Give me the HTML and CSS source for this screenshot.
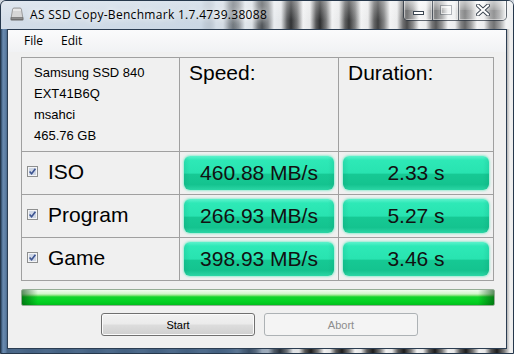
FILE: index.html
```html
<!DOCTYPE html>
<html lang="en">
<head>
  <meta charset="UTF-8" />
  <title>AS SSD Copy-Benchmark</title>
  <link rel="stylesheet" href="styles.css">
</head>
<body>

<div class="window">
  <div class="titlebar">
    <svg class="app-icon" width="16" height="16" viewBox="0 0 16 16">
      <path d="M2.2 11.5 L3.6 3.2 Q3.9 2 5.1 2 H10.9 Q12.1 2 12.4 3.2 L13.8 11.5 Z" fill="#d6d6d6" stroke="#8a8a8a" stroke-width="0.8"/>
      <path d="M4 4 H12" stroke="#fafafa" stroke-width="1.2"/>
      <rect x="1.5" y="11" width="13" height="3.6" rx="1" fill="#6f6f6f"/>
      <rect x="2.5" y="11.6" width="11" height="1" fill="#a5a5a5"/>
    </svg>
    <span class="title">AS SSD Copy-Benchmark 1.7.4739.38088</span>
    <div class="caption-buttons">
      <span class="cap cap-min"><i></i></span>
      <span class="cap cap-max"><i></i></span>
      <span class="cap cap-close">
        <svg width="14" height="12" viewBox="0 0 14 12">
          <path d="M2 1.5 L12 10.5 M12 1.5 L2 10.5" stroke="#3a4450" stroke-width="4" stroke-linecap="round"/>
          <path d="M2 1.5 L12 10.5 M12 1.5 L2 10.5" stroke="#ffffff" stroke-width="2.2" stroke-linecap="round"/>
        </svg>
      </span>
    </div>
  </div>

  <div class="client">
    <div class="menubar">
      <span>File</span>
      <span>Edit</span>
    </div>

    <div class="results">
      <div class="cell info">Samsung SSD 840<br>EXT41B6Q<br>msahci<br>465.76 GB</div>
      <div class="cell head">Speed:</div>
      <div class="cell head">Duration:</div>

      <div class="cell label">
        <svg class="check" width="11" height="11" viewBox="0 0 11 11"><rect x="0.5" y="0.5" width="10" height="10" fill="#f4f5f7" stroke="#8e8f8f"/><rect x="2" y="2" width="7" height="7" fill="#cfd7e6"/><path d="M2.6 5.4 L4.6 7.8 L8.4 2.8" fill="none" stroke="#3d5491" stroke-width="1.6"/></svg>
        ISO
      </div>
      <div class="cell"><div class="value">460.88 MB/s</div></div>
      <div class="cell"><div class="value">2.33 s</div></div>

      <div class="cell label">
        <svg class="check" width="11" height="11" viewBox="0 0 11 11"><rect x="0.5" y="0.5" width="10" height="10" fill="#f4f5f7" stroke="#8e8f8f"/><rect x="2" y="2" width="7" height="7" fill="#cfd7e6"/><path d="M2.6 5.4 L4.6 7.8 L8.4 2.8" fill="none" stroke="#3d5491" stroke-width="1.6"/></svg>
        Program
      </div>
      <div class="cell"><div class="value">266.93 MB/s</div></div>
      <div class="cell"><div class="value">5.27 s</div></div>

      <div class="cell label">
        <svg class="check" width="11" height="11" viewBox="0 0 11 11"><rect x="0.5" y="0.5" width="10" height="10" fill="#f4f5f7" stroke="#8e8f8f"/><rect x="2" y="2" width="7" height="7" fill="#cfd7e6"/><path d="M2.6 5.4 L4.6 7.8 L8.4 2.8" fill="none" stroke="#3d5491" stroke-width="1.6"/></svg>
        Game
      </div>
      <div class="cell"><div class="value">398.93 MB/s</div></div>
      <div class="cell"><div class="value">3.46 s</div></div>
    </div>

    <div class="progress"></div>

    <div class="buttons">
      <button class="btn">Start</button>
      <button class="btn" disabled>Abort</button>
    </div>
  </div>
</div>

</body>
</html>
```

FILE: styles.css
```css
body {
  margin: 0;
  padding: 0;
  background: #cfd6de;
}

/* Ventana con marco estilo Aero */
.window {
  width: 514px;
  height: 354px;
  box-sizing: border-box;
  border: 1px solid #26384c;
  border-radius: 6px 6px 0 0;
  display: flex;
  flex-direction: column;
  overflow: hidden;
  background:
    linear-gradient(90deg, #2f4a68 0, #6a8bb0 2px, #5a7ba0 5px, rgba(70,100,134,0.97) 6px, rgba(70,100,134,0.95) 230px, rgba(76,106,140,0) 300px),
    repeating-linear-gradient(90deg, #1c1c1c 0, #777 7px, #f1f1f1 13px, #e6e6e6 19px, #555 25px, #1c1c1c 31px),
    #cccccc;
}

.titlebar {
  height: 28px;
  display: flex;
  align-items: flex-start;
  background:
    linear-gradient(180deg, rgba(255,255,255,0.3), rgba(255,255,255,0) 70%),
    linear-gradient(90deg, #d4dee9 0, #cad7e4 200px, rgba(196,210,224,0.45) 235px, rgba(196,210,224,0.08) 300px, rgba(235,238,242,0.2) 390px, rgba(240,242,245,0.45) 100%),
    repeating-linear-gradient(90deg, #1a1a1a 0, #6d6d6d 6px, #f4f4f4 12px, #eaeaea 19px, #4a4a4a 25px, #1a1a1a 29px),
    #cfd6de;
}

.app-icon {
  margin: 5px 0 0 8px;
  flex: none;
}

.title {
  margin-left: 5px;
  font-family: "Open Sans", "Noto Sans", sans-serif;
  font-size: 12px;
  letter-spacing: 0.3px;
  line-height: 28px;
  color: #000;
  text-shadow: 0 0 6px #fff, 0 0 10px rgba(255,255,255,0.9);
}

.caption-buttons {
  margin: -1px 6px 0 auto;
  height: 20px;
  display: flex;
  border: 1px solid rgba(35,45,58,0.7);
  border-top: none;
  border-radius: 0 0 5px 5px;
  overflow: hidden;
}

.cap {
  display: flex;
  align-items: center;
  justify-content: center;
  height: 100%;
  background: linear-gradient(180deg, rgba(255,255,255,0.5), rgba(255,255,255,0.2) 50%, rgba(255,255,255,0.08) 51%, rgba(255,255,255,0.25));
  box-shadow: inset 0 0 0 1px rgba(255,255,255,0.45);
}

.cap + .cap {
  border-left: 1px solid rgba(35,45,58,0.6);
}

.cap-min { width: 28px; }
.cap-max { width: 25px; }
.cap-close { width: 47px; }

.cap-min i {
  width: 9px;
  height: 2px;
  margin-top: 5px;
  background: #fff;
  border: 1px solid #3a4450;
}

.cap-max i {
  width: 8px;
  height: 5px;
  border: 1px solid #fff;
  border-top-width: 2px;
  outline: 1px solid rgba(58,68,80,0.6);
  opacity: 0.6;
}

.client {
  flex: 1;
  margin: 0 6px 4px 6px;
  border: 1px solid #2b3d52;
  background: #f0f0f0;
  display: flex;
  flex-direction: column;
}

.menubar {
  height: 22px;
  padding-left: 7px;
  display: flex;
  background: linear-gradient(180deg, #fbfbfc, #f1f2f4);
  font-family: "Open Sans", "Noto Sans", sans-serif;
  font-size: 12px;
  line-height: 22px;
}

.menubar span {
  padding: 0 9px;
}

/* Tabla de resultados */
.results {
  margin: 5px 0 0 13px;
  width: max-content;
  display: grid;
  grid-template-columns: 157px 158px 154px;
  grid-template-rows: 93px 42px 42px 42px;
  gap: 1px;
  background: #a0a0a0;
  border: 1px solid #a0a0a0;
  font-family: "Liberation Sans", Arial, sans-serif;
  color: #000;
}

.cell {
  background: #f0f0f0;
}

.info {
  padding: 4px 0 0 12px;
  font-size: 13px;
  line-height: 21px;
}

.head {
  padding: 3px 0 0 9px;
  font-size: 21px;
  line-height: 24px;
}

.label {
  display: flex;
  align-items: center;
  gap: 10px;
  padding: 0 0 3px 5px;
  font-size: 21px;
}

.check {
  flex: none;
  margin-top: -1px;
}

.value {
  margin: 4px;
  height: 34px;
  border-radius: 6px;
  display: flex;
  align-items: center;
  justify-content: center;
  font-size: 21px;
  color: #111;
  background:
    linear-gradient(90deg, rgba(0,120,90,0.12) 0, rgba(0,120,90,0) 6px, rgba(0,120,90,0) calc(100% - 6px), rgba(0,120,90,0.12) 100%),
    linear-gradient(180deg, #5cf2cc 0, #2ee9b7 12%, #28e3b0 50%, #16c994 54%, #14c38f 84%, #2bd6a5 100%);
  box-shadow: 0 0 2px 1px rgba(120,235,200,0.7);
}

.progress {
  margin: 8px 0 0 13px;
  width: 474px;
  height: 17px;
  box-sizing: border-box;
  border: 1px solid #95ad95;
  border-radius: 2px;
  background:
    linear-gradient(90deg, rgba(0,70,10,0.6) 0, rgba(0,80,10,0) 16px, rgba(0,80,10,0) calc(100% - 16px), rgba(0,70,10,0.6) 100%),
    linear-gradient(180deg, #f2fcf0 0, #d2f5cb 26%, #74e06c 38%, #12d52c 46%, #02d221 80%, #02bd1d 100%);
}

.buttons {
  margin: 7px 0 0 93px;
  display: flex;
  gap: 9px;
}

.btn {
  width: 154px;
  height: 23px;
  box-sizing: border-box;
  padding: 0;
  border: 1px solid #707070;
  border-radius: 3px;
  background: linear-gradient(180deg, #f2f2f2 0, #ebebeb 48%, #dddddd 52%, #cfcfcf 100%);
  box-shadow: inset 0 0 0 1px #fbfbfb;
  font-family: "Liberation Sans", Arial, sans-serif;
  font-size: 11px;
  color: #000;
}

.btn:disabled {
  border-color: #adb2b5;
  background: #f4f4f4;
  box-shadow: none;
  color: #8d8d8d;
}
```
